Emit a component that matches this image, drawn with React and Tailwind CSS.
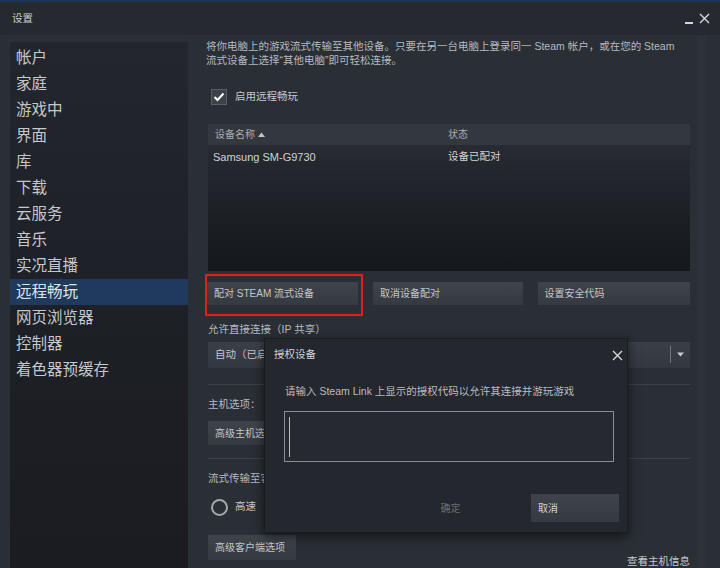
import React from 'react'

const font = { fontFamily: '"Liberation Sans", "Noto Sans CJK SC", sans-serif' }

const navItems = ['帐户', '家庭', '游戏中', '界面', '库', '下载', '云服务', '音乐', '实况直播', '远程畅玩', '网页浏览器', '控制器', '着色器预缓存']

const Btn = ({ className = '', children }) => (
    <div className={`flex items-center px-[7px] whitespace-nowrap overflow-hidden bg-gradient-to-b from-[#3f434b] to-[#353940] text-[10px] text-[#c3c6cb] ${className}`}>
        {children}
    </div>
)

const App = () => {
    return (
        <div style={font} className="relative w-[720px] h-[568px] overflow-hidden bg-[#2a2e35] flex flex-col">
            {/* title bar */}
            <div className="h-[2px] bg-[#1d3557]" />
            <div className="h-[33px] flex items-center justify-between pl-[12px] pr-[10px] bg-[#262a30]">
                <span className="text-[10.5px] text-[#c9ccd1]">设置</span>
                <div className="flex items-center gap-[6px] text-[#d6d8db]">
                    <span className="w-[8px] h-[2px] bg-[#d6d8db] mt-[8px]" />
                    <svg width="11" height="11" viewBox="0 0 11 11"><path d="M1 1L10 10M10 1L1 10" stroke="#d6d8db" strokeWidth="1.4" /></svg>
                </div>
            </div>

            <div className="flex flex-1 min-h-0">
                {/* sidebar */}
                <nav className="shrink-0 ml-[10px] w-[178px] pt-[3px] bg-gradient-to-b from-[#23262d] via-[#1d2026] to-[#1a1c21] border-t-[7px] border-[#2b2f37]">
                    {navItems.map((item) => (
                        <div
                            key={item}
                            className={`h-[26px] flex items-center pl-[6px] text-[15.5px] text-[#c5c8cd] ${item === '远程畅玩' ? 'bg-[#1f3a5c] text-[#dfe3e8]' : ''}`}
                        >
                            {item}
                        </div>
                    ))}
                </nav>

                {/* content */}
                <main className="flex-1 min-w-0 pl-[18px] pr-[7px] flex flex-col">
                    <p className="pt-[4px] text-[10.5px] leading-[14px] text-[#b6bac0] whitespace-nowrap">
                        将你电脑上的游戏流式传输至其他设备。只要在另一台电脑上登录同一 Steam 帐户，或在您的 Steam<br />
                        流式设备上选择“其他电脑”即可轻松连接。
                    </p>

                    <div className="mt-[22px] ml-[5px] flex items-center h-[16px] gap-[8px]">
                        <div className="w-[16px] h-[16px] bg-[#3d414a] border border-[#5a5e66] flex items-center justify-center">
                            <svg width="12" height="10" viewBox="0 0 12 10"><path d="M1.5 5L4.5 8L10.5 1.5" fill="none" stroke="#ffffff" strokeWidth="2" /></svg>
                        </div>
                        <span className="text-[10.5px] text-[#c3c6cb]">启用远程畅玩</span>
                    </div>

                    {/* device table */}
                    <div className="mt-[19px] ml-[2px] w-[482px] h-[150px] flex flex-col bg-gradient-to-b from-[#2a2e35] via-[#1f2329] to-[#14171b]">
                        <div className="h-[21px] bg-[#33373e] flex items-center text-[10px] text-[#a9adb3]">
                            <span className="w-[240px] pl-[7px] flex items-center gap-[3px]">
                                设备名称
                                <svg width="7" height="5" viewBox="0 0 7 5"><path d="M0 5L3.5 0.5L7 5Z" fill="#c0c3c8" /></svg>
                            </span>
                            <span>状态</span>
                        </div>
                        <div className="h-[24px] flex items-center text-[11px] text-[#d0d3d7]">
                            <span className="w-[240px] pl-[5px]">Samsung SM-G9730</span>
                            <span className="text-[10.5px]">设备已配对</span>
                        </div>
                    </div>

                    {/* pair buttons */}
                    <div className="mt-[11px] ml-[1px] flex gap-[15px]">
                        <div className="relative">
                            <Btn className="w-[151px] h-[23px]">配对 STEAM 流式设备</Btn>
                            <div className="absolute -left-[2px] -top-[8px] w-[158px] h-[42px] border-2 border-[#e0201c] rounded-[1px]" />
                        </div>
                        <Btn className="w-[152px] h-[23px]">取消设备配对</Btn>
                        <Btn className="w-[155px] h-[23px]">设置安全代码</Btn>
                    </div>

                    <div className="mt-[17px] ml-[2px] text-[10.5px] leading-[14px] text-[#b6bac0]">允许直接连接（IP 共享）</div>

                    <div className="mt-[6px] ml-[2px] w-[482px] h-[27px] flex items-center justify-between bg-gradient-to-b from-[#3b3f47] to-[#33373e]">
                        <span className="ml-[7px] whitespace-nowrap text-[10.5px] text-[#c3c6cb]">自动（已启</span>
                        <div className="flex items-center h-full">
                            <span className="w-px h-[17px] bg-[#6f737a]" />
                            <svg className="mx-[6px]" width="7" height="5" viewBox="0 0 7 5"><path d="M0 0.5L7 0.5L3.5 4.5Z" fill="#c9ccd1" /></svg>
                        </div>
                    </div>

                    <div className="mt-[16px] ml-[2px] w-[482px] h-px bg-[#3c4047]" />
                    <div className="mt-[12px] ml-[2px] text-[10.5px] leading-[14px] text-[#b6bac0]">主机选项：</div>
                    <Btn className="mt-[10px] ml-[2px] w-[100px] h-[25px]">高级主机选项</Btn>

                    <div className="mt-[13px] ml-[2px] w-[482px] h-px bg-[#3c4047]" />
                    <div className="mt-[12px] ml-[2px] text-[10.5px] leading-[14px] text-[#b6bac0]">流式传输至客户端：</div>

                    <div className="mt-[13px] ml-[5px] flex items-center gap-[7px] h-[18px]">
                        <span className="w-[17px] h-[17px] rounded-full border-2 border-[#a3a6ab]" />
                        <span className="text-[10.5px] text-[#c3c6cb]">高速</span>
                    </div>

                    <div className="mt-[19px] ml-[2px] w-[482px] flex justify-between">
                        <Btn className="w-[88px] h-[25px]">高级客户端选项</Btn>
                        <span className="pt-[19px] text-[10.5px] leading-[14px] text-[#c3c6cb]">查看主机信息</span>
                    </div>
                </main>

                {/* scroll track */}
                <div className="shrink-0 w-[9px] mr-[14px] bg-[#2d3138]" />
            </div>

            {/* authorize device dialog */}
            <div className="absolute left-[264px] top-[338px] w-[364px] h-[195px] bg-[#24272d] border border-[#1a1c20] shadow-[0_3px_10px_rgba(0,0,0,0.6)] flex flex-col">
                <div className="h-[32px] flex items-center justify-between pl-[9px] pr-[4px]">
                    <span className="text-[10.5px] text-[#d0d3d7]">授权设备</span>
                    <svg width="11" height="11" viewBox="0 0 11 11"><path d="M1 1L10 10M10 1L1 10" stroke="#d6d8db" strokeWidth="1.4" /></svg>
                </div>
                <p className="mt-[13px] pl-[20px] text-[10.5px] leading-[14px] text-[#b9bdc2]">请输入 Steam Link 上显示的授权代码以允许其连接并游玩游戏</p>
                <div className="mt-[13px] ml-[19px] w-[330px] h-[51px] border border-[#8a8e94] bg-[#262a30] flex items-center pl-[4px]">
                    <span className="w-px h-[40px] bg-[#b8bcc1]" />
                </div>
                <div className="mt-[32px] flex items-center">
                    <span className="w-[265px] text-center text-[10px] text-[#6c7076] pl-[106px]">确定</span>
                    <Btn className="ml-[1px] w-[88px] h-[28px] text-[10.5px] text-[#d0d3d7]">取消</Btn>
                </div>
            </div>
        </div>
    )
}

export default App
